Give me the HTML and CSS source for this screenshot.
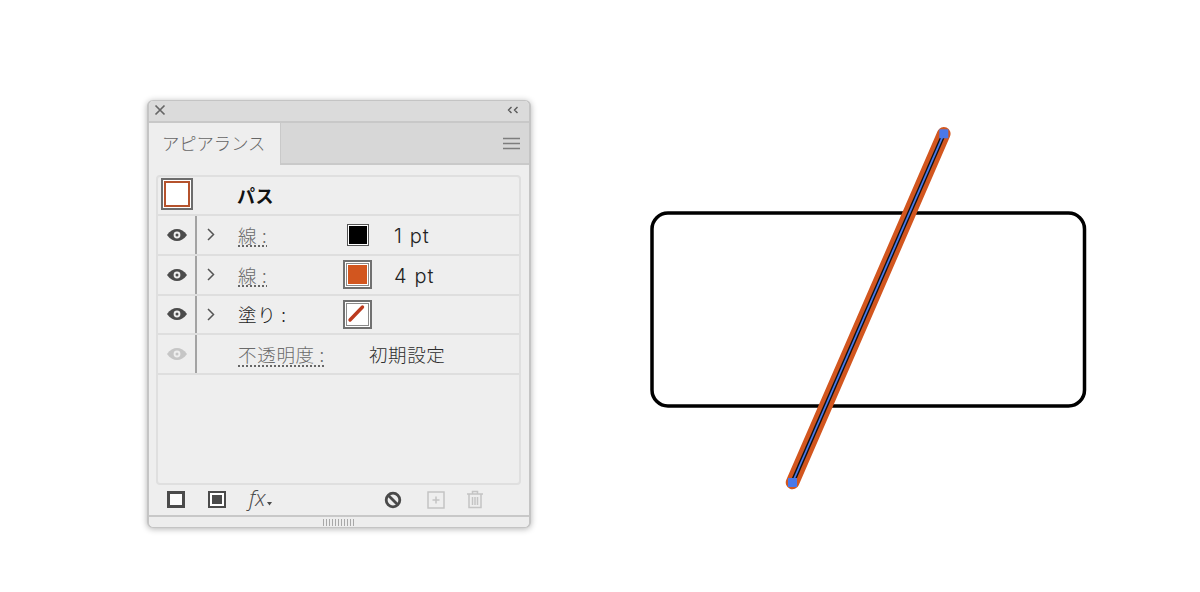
FILE: index.html
```html
<!DOCTYPE html>
<html lang="ja">
<head>
<meta charset="utf-8">
<title>アピアランス</title>
<link rel="stylesheet" href="styles.css">
</head>
<body>
<main class="canvas">
  <section class="panel">
    <header class="titlebar">
      <svg class="close" width="12" height="12" viewBox="0 0 12 12"><path d="M1.500 1.500l9 9M10.500 1.500l-9 9"/></svg>
      <svg class="collapse" width="12" height="8" viewBox="0 0 12 8"><path d="M4.500 1L1.500 4l3 3M10.500 1l-3 3 3 3"/></svg>
    </header>
    <div class="tabs">
      <div class="tab">アピアランス</div>
      <div class="tabfill">
        <svg class="menu" width="17" height="13" viewBox="0 0 17 13"><path d="M0 1.500h17M0 6.500h17M0 11.500h17"/></svg>
      </div>
    </div>
    <div class="content">
      <div class="list">
        <div class="row head">
          <div class="thumb"><span class="thumb-in"></span></div>
          <strong class="objname">パス</strong>
        </div>
        <div class="row">
          <div class="eye"><svg width="22" height="14" viewBox="0 0 22 14"><path class="eye-shape" d="M1 7C4 2.800 7.300 1 11 1s7 1.800 10 6c-3 4.200-6.300 6-10 6S4 11.200 1 7z"/><circle class="eye-hole" cx="11" cy="7" r="3.400"/><circle class="eye-shape" cx="11" cy="7" r="1.500"/></svg></div>
          <div class="chev"><svg width="8" height="13" viewBox="0 0 8 13"><path d="M1 1l5.500 5.500L1 12"/></svg></div>
          <span class="label"><span class="dotted">線 :</span></span>
          <span class="swatch-cell"><span class="swatch-small"><i></i></span></span>
          <span class="value">1 pt</span>
        </div>
        <div class="row">
          <div class="eye"><svg width="22" height="14" viewBox="0 0 22 14"><path class="eye-shape" d="M1 7C4 2.800 7.300 1 11 1s7 1.800 10 6c-3 4.200-6.300 6-10 6S4 11.200 1 7z"/><circle class="eye-hole" cx="11" cy="7" r="3.400"/><circle class="eye-shape" cx="11" cy="7" r="1.500"/></svg></div>
          <div class="chev"><svg width="8" height="13" viewBox="0 0 8 13"><path d="M1 1l5.500 5.500L1 12"/></svg></div>
          <span class="label"><span class="dotted">線 :</span></span>
          <span class="swatch-cell"><span class="swatch"><span class="swatch-inner"><i class="orange"></i></span></span></span>
          <span class="value">4 pt</span>
        </div>
        <div class="row">
          <div class="eye"><svg width="22" height="14" viewBox="0 0 22 14"><path class="eye-shape" d="M1 7C4 2.800 7.300 1 11 1s7 1.800 10 6c-3 4.200-6.300 6-10 6S4 11.200 1 7z"/><circle class="eye-hole" cx="11" cy="7" r="3.400"/><circle class="eye-shape" cx="11" cy="7" r="1.500"/></svg></div>
          <div class="chev"><svg width="8" height="13" viewBox="0 0 8 13"><path d="M1 1l5.500 5.500L1 12"/></svg></div>
          <span class="label dark">塗り :</span>
          <span class="swatch-cell"><span class="swatch"><span class="swatch-inner"><svg class="slash" width="19" height="19" viewBox="0 0 19 19"><path d="M3 16L15.500 3"/></svg></span></span></span>
        </div>
        <div class="row">
          <div class="eye faded"><svg width="22" height="14" viewBox="0 0 22 14"><path class="eye-shape" d="M1 7C4 2.800 7.300 1 11 1s7 1.800 10 6c-3 4.200-6.300 6-10 6S4 11.200 1 7z"/><circle class="eye-hole" cx="11" cy="7" r="3.400"/><circle class="eye-shape" cx="11" cy="7" r="1.500"/></svg></div>
          <div class="chev"></div>
          <span class="label"><span class="dotted">不透明度 :</span></span>
          <span class="value-jp">初期設定</span>
        </div>
      </div>
      <footer class="tools">
        <span class="tool stroke-tool"></span>
        <span class="tool fill-tool"><i></i></span>
        <span class="fx">fx<svg width="5" height="4" viewBox="0 0 5 4"><path d="M0 0h5L2.500 3.500z"/></svg></span>
        <svg class="clear" width="18" height="18" viewBox="0 0 18 18"><circle cx="9" cy="9" r="6.800"/><path d="M4.200 4.200l9.600 9.600"/></svg>
        <svg class="add" width="18" height="18" viewBox="0 0 18 18"><path d="M1 1h16v16H1zM9 5.500v7M5.500 9h7"/></svg>
        <svg class="trash" width="18" height="19" viewBox="0 0 18 19"><path d="M1 4h16M6.500 4V1.500h5V4M3 4v13.500h12V4M6.500 7v8M9 7v8M11.500 7v8"/></svg>
      </footer>
    </div>
    <div class="grip"><span class="grip-lines"></span></div>
  </section>
  <svg class="art" width="1200" height="592" viewBox="0 0 1200 592">
    <rect class="rect" x="652" y="213" width="432.500" height="193" rx="16" ry="16"/>
    <path class="orange-line" d="M943.800 133.800L792.500 482.500"/>
    <path class="black-line" d="M943.800 133.800L792.500 482.500"/>
    <path class="blue-line" d="M943.800 133.800L792.500 482.500"/>
    <rect class="anchor" x="939.300" y="129.300" width="9" height="9"/>
    <rect class="anchor" x="788" y="478" width="9" height="9"/>
  </svg>
</main>
</body>
</html>
```
FILE: styles.css
```css
* { box-sizing: border-box; }
html, body { margin: 0; height: 592px; overflow: hidden; background: #fff; }
.canvas { position: relative; width: 1200px; height: 592px; font-family: "Noto Sans CJK JP", "Noto Sans", sans-serif; }
.art { position: absolute; left: 0; top: 0; }
.rect { fill: none; stroke: #000; stroke-width: 3.500; }
.orange-line { fill: none; stroke: #d2561f; stroke-width: 13.500; stroke-linecap: round; }
.black-line { fill: none; stroke: #111; stroke-width: 4.500; }
.blue-line { fill: none; stroke: #4a78e8; stroke-width: 1.800; }
.anchor { fill: #4a78e8; }

.panel { position: absolute; z-index: 1; left: 147px; top: 100px; width: 384px; height: 428px; display: flex; flex-direction: column; background: #eeeeee; border-radius: 6px; border: 1px solid #c4c4c4; border-right-width: 2px; border-left-width: 2px; box-shadow: 0 1px 6px rgba(0,0,0,.3); overflow: hidden; }
.titlebar { height: 22px; flex: none; display: flex; align-items: center; justify-content: space-between; padding: 0 10px 2px 5px; background: #dbdbdb; border-bottom: 2px solid #c8c8c8; }
.close path { fill: none; stroke: #666; stroke-width: 1.700; }
.collapse path { fill: none; stroke: #5a5a5a; stroke-width: 1.400; }

.tabs { height: 42px; flex: none; display: flex; }
.tab { width: 131px; padding: 8px 0 0 13px; background: #eeeeee; color: #666; font-size: 17.300px; line-height: 24px; font-weight: 300; }
.tabfill { flex: 1; display: flex; align-items: center; justify-content: flex-end; padding: 0 9px 0 0; background: #d7d7d7; border-bottom: 2px solid #c9c9c9; border-left: 1px solid #c9c9c9; }
.menu path { fill: none; stroke: #7d7d7d; stroke-width: 1.500; }

.content { flex: 1; min-height: 0; display: flex; flex-direction: column; padding: 10px 8px 0 7px; }
.list { flex: none; height: 310px; border: 2px solid #dfdfdf; border-radius: 4px; }
.row { height: 39.800px; display: flex; align-items: center; border-bottom: 2px solid #dedede; }
.row.head { height: 39px; }
.thumb { width: 32px; height: 32px; margin: -3px 0 0 3px; padding: 1px; border: 2px solid #6c6c6c; background: #fff; }
.thumb-in { display: block; width: 26px; height: 26px; background: #fff; border: 2px solid #b5522c; }
.objname { margin-left: 44px; font-size: 18px; font-weight: 700; color: #111; letter-spacing: .5px; margin-top: -2px; }
.eye { width: 39px; height: 100%; flex: none; display: flex; align-items: center; justify-content: center; border-right: 2px solid #a3a3a3; }
.eye-shape { fill: #4b4b4b; }
.eye-hole { fill: #eeeeee; }
.eye.faded .eye-shape { fill: #c6c6c6; }
.chev { width: 41px; flex: none; padding-left: 10px; display: flex; }
.chev path { fill: none; stroke: #555; stroke-width: 1.500; }
.label { width: 106px; flex: none; font-size: 18.500px; letter-spacing: .7px; line-height: 26px; color: #6a6a6a; font-weight: 300; }
.label.dark { color: #1c1c1c; }
.dotted { text-decoration: underline dotted #666; text-underline-offset: 3px; text-decoration-thickness: 1.500px; }
.swatch-cell { width: 29px; flex: none; margin-left: -1px; display: flex; justify-content: center; }
.swatch-small { width: 22px; height: 22px; display: block; border: 1px solid #555; padding: 1px; background: #fff; }
.swatch-small i { display: block; width: 100%; height: 100%; background: #000; }
.swatch { width: 29px; height: 29px; display: block; background: #fff; border: 2px solid #707070; padding: 1px; }
.swatch-inner { display: flex; width: 100%; height: 100%; border: 1px solid #8a8a8a; padding: 1px; }
.swatch-inner i { display: block; width: 100%; height: 100%; }
.orange { background: #d2561f; }
.slash { flex: none; margin: -1px; }
.slash path { fill: none; stroke: #bb3a1e; stroke-width: 3.400; stroke-linecap: round; }
.value { margin: 2px 0 0 22px; font-family: Inter, "Noto Sans", sans-serif; font-weight: 300; font-size: 20px; color: #222; letter-spacing: 1.100px; }
.value-jp { margin-left: 25px; font-size: 18.500px; letter-spacing: .6px; color: #2c2c2c; font-weight: 300; }

.tools { flex: 1; min-height: 0; display: flex; align-items: center; padding: 0 0 1px 11px; }
.tool { width: 18px; height: 17px; flex: none; }
.stroke-tool { border: 3.500px solid #4a4a4a; background: #fbfbfb; }
.fill-tool { margin-left: 23px; border: 2px solid #4a4a4a; background: #fff; padding: 2px; }
.fill-tool i { display: block; width: 100%; height: 100%; background: #4a4a4a; }
.fx { margin: -5px 0 0 23px; width: 23px; font-family: "Open Sans", sans-serif; font-style: italic; font-weight: 300; font-size: 22px; line-height: 24px; color: #4a4a4a; }
.fx svg { fill: #4a4a4a; margin-left: 1px; }
.clear { margin-left: 112px; }
.clear circle, .clear path { fill: none; stroke: #4a4a4a; stroke-width: 2.800; }
.add { margin-left: 25px; }
.add path { fill: none; stroke: #c4c4c4; stroke-width: 1.500; }
.trash { margin-left: 21px; }
.trash path { fill: none; stroke: #c4c4c4; stroke-width: 1.500; }

.grip { height: 12px; flex: none; display: flex; justify-content: center; padding-top: 2px; border-top: 2px solid #c8c8c8; background: #ededed; }
.grip-lines { width: 32px; height: 7px; background: repeating-linear-gradient(90deg, #a8a8a8 0 1px, transparent 1px 3px); }
```
